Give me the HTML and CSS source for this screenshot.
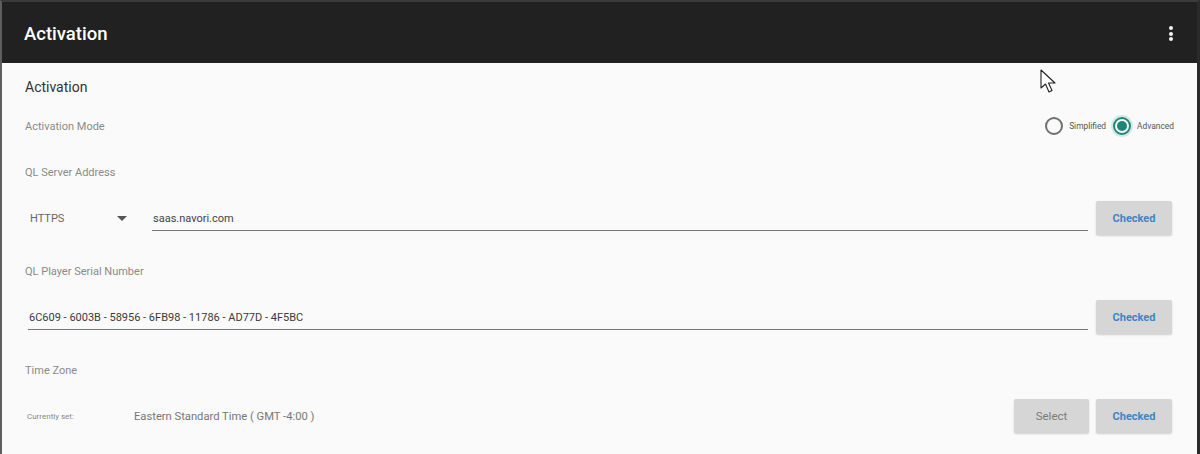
FILE: index.html
```html
<!DOCTYPE html>
<html>
<head>
<meta charset="utf-8">
<title>Activation</title>
<link rel="stylesheet" href="styles.css">
</head>
<body>
<div class="frame">
  <header class="appbar">
    <h1 class="appbar-title">Activation</h1>
    <div class="kebab"><span></span><span></span><span></span></div>
  </header>
  <main class="content">
    <h2 class="heading">Activation</h2>
    <div class="mode-row">
      <span class="label">Activation Mode</span>
      <div class="radios">
        <label class="radio"><span class="radio-circle"></span><span class="radio-text">Simplified</span></label>
        <label class="radio checked"><span class="radio-circle"><span class="radio-dot"></span></span><span class="radio-text">Advanced</span></label>
      </div>
    </div>

    <div class="label section-label">QL Server Address</div>
    <div class="field-row">
      <div class="select">
        <span class="select-text">HTTPS</span>
        <svg class="select-arrow" width="10" height="5" viewBox="0 0 10 5"><path d="M0 0 L10 0 L5 5 Z" fill="#555"/></svg>
      </div>
      <div class="input server-input">saas.navori.com</div>
      <button class="btn btn-checked">Checked</button>
    </div>

    <div class="label section-label">QL Player Serial Number</div>
    <div class="field-row">
      <div class="input serial-input">6C609 - 6003B - 58956 - 6FB98 - 11786 - AD77D - 4F5BC</div>
      <button class="btn btn-checked">Checked</button>
    </div>

    <div class="label section-label">Time Zone</div>
    <div class="field-row tz-row">
      <span class="tz-small">Currently set:</span>
      <span class="tz-value">Eastern Standard Time ( GMT -4:00 )</span>
      <button class="btn btn-select">Select</button>
      <button class="btn btn-checked">Checked</button>
    </div>
  </main>
  <svg class="cursor" width="18" height="26" viewBox="0 0 18 26"><path d="M1 1 L1 19 L5.5 15 L9 23 L12 21.5 L8.5 14 L15 14 Z" fill="#fff" stroke="#222" stroke-width="1.1" stroke-linejoin="round"/></svg>
</div>
</body>
</html>
```
FILE: styles.css
```css
* { box-sizing: border-box; }
html, body { margin: 0; padding: 0; }
body {
  width: 1200px;
  height: 454px;
  overflow: hidden;
  background: #2a2a2a;
  font-family: Roboto, "Noto Sans", Arial, sans-serif;
}
.frame {
  position: relative;
  width: 1200px;
  height: 454px;
  border-left: 2px solid #5e5e5e;
  border-right: 3px solid #2a2a2a;
  border-top: 2px solid #3a3a3a;
  background: #fafafa;
  display: flex;
  flex-direction: column;
}
.appbar {
  height: 61px;
  background: #212121;
  display: flex;
  align-items: center;
  justify-content: space-between;
  padding: 2px 24px 0 22px;
  flex-shrink: 0;
}
.appbar-title {
  margin: 0;
  color: #fff;
  font-size: 18.5px;
  font-weight: 500;
}
.kebab {
  display: flex;
  flex-direction: column;
  gap: 1.5px;
}
.kebab span {
  width: 4px;
  height: 4px;
  border-radius: 50%;
  background: #f2f2f2;
}
.content {
  padding: 0 25px 0 23px;
  display: flex;
  flex-direction: column;
}
.heading {
  margin: 0;
  height: 48px;
  line-height: 48px;
  font-size: 14px;
  font-weight: 400;
  color: #333;
}
.label {
  font-size: 11px;
  color: #8a8a8a;
}
.mode-row {
  height: 30px;
  display: flex;
  align-items: center;
  justify-content: space-between;
}
.radios {
  display: flex;
  align-items: center;
  gap: 7px;
  margin-right: -2px;
}
.radio {
  display: flex;
  align-items: center;
  gap: 6px;
}
.radio-circle {
  width: 18px;
  height: 18px;
  border-radius: 50%;
  border: 2px solid #707070;
  display: flex;
  align-items: center;
  justify-content: center;
}
.radio.checked .radio-circle {
  border-color: #1d8677;
  box-shadow: 0 0 0 2px #d3e8e4;
}
.radio-dot {
  width: 10px;
  height: 10px;
  border-radius: 50%;
  background: #1d8677;
}
.radio-text {
  font-size: 8.4px;
  color: #555;
}
.section-label {
  height: 30px;
  line-height: 30px;
  margin-top: 17px;
}
.field-row {
  height: 34px;
  margin-top: 13px;
  display: flex;
  align-items: center;
}
.field-row + .section-label { margin-top: 22px; }
.select {
  width: 112px;
  display: flex;
  align-items: center;
  justify-content: space-between;
  padding: 0 10px 0 5px;
  margin-right: 15px;
}
.select-text {
  font-size: 11px;
  color: #666;
}
.input {
  flex: 1;
  height: 24px;
  line-height: 24px;
  border-bottom: 1px solid #777;
  font-size: 11px;
  color: #444;
  padding-left: 1px;
  margin-top: 2px;
}
.serial-input {
  margin-left: 3px;
  padding-left: 1px;
  font-size: 11px;
  color: #3a3a3a;
}
.btn {
  height: 34px;
  border: none;
  border-radius: 2px;
  background: #d6d6d6;
  box-shadow: 0 1px 2px rgba(0,0,0,0.18);
  font-family: Roboto, "Noto Sans", Arial, sans-serif;
  padding: 0;
}
.btn-checked {
  width: 76px;
  margin-left: 8px;
  color: #3d85c6;
  font-weight: 700;
  font-size: 11px;
}
.btn-select {
  width: 75px;
  color: #7a7a7a;
  font-size: 11.5px;
  font-weight: 400;
}
.tz-small {
  width: 109px;
  padding-left: 2px;
  font-size: 8px;
  color: #888;
}
.tz-value {
  flex: 1;
  font-size: 11.2px;
  color: #777;
}
.tz-row .btn-checked { margin-left: 7px; }
.cursor {
  position: absolute;
  left: 1038px;
  top: 67px;
}
```
